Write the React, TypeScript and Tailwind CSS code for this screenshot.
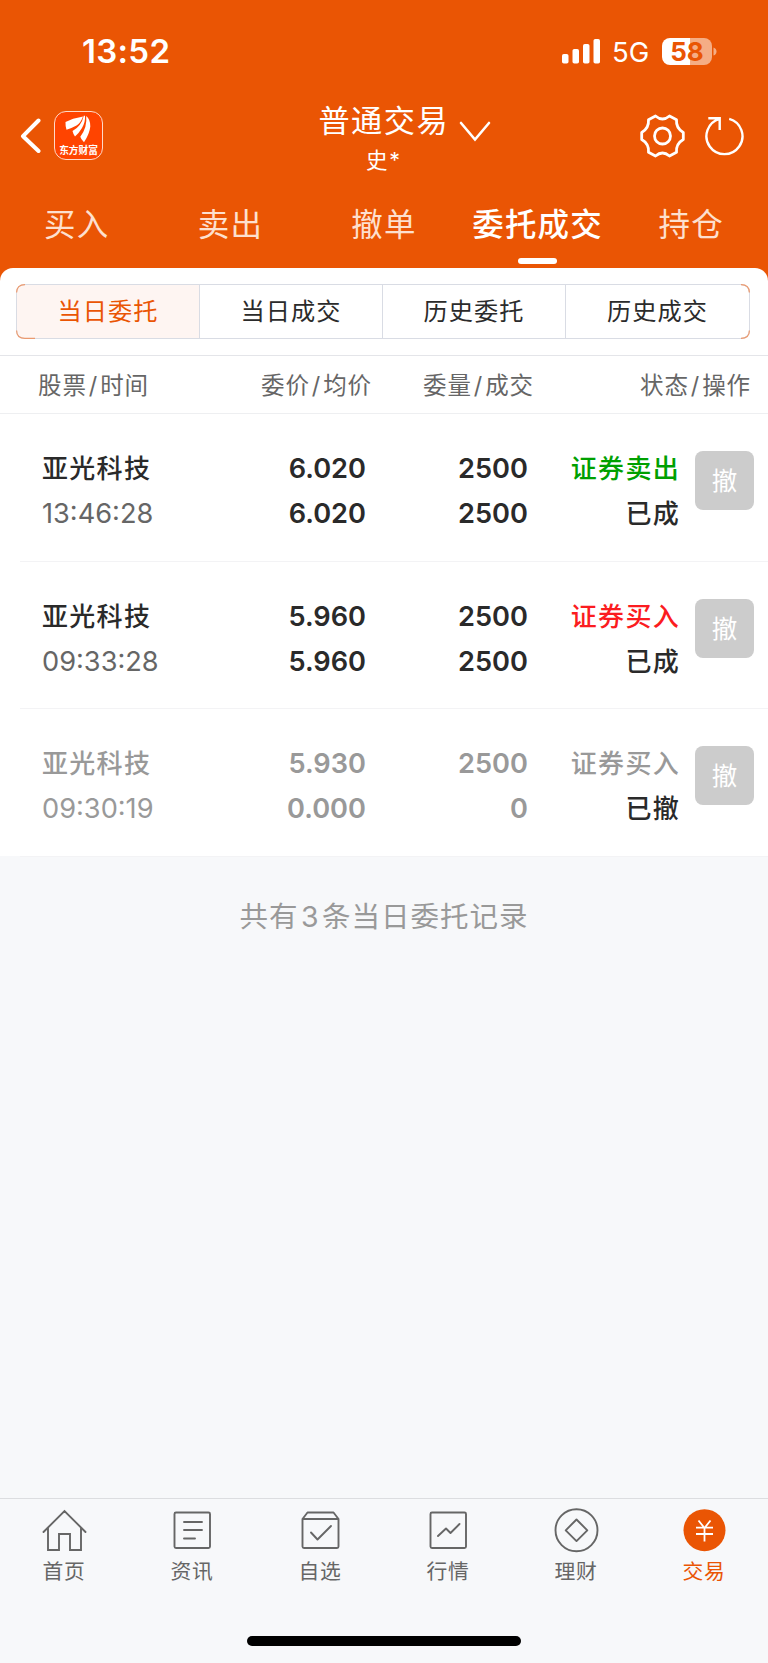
import React from 'react';

const tabs = ['买入', '卖出', '撤单', '委托成交', '持仓'];
const segments = ['当日委托', '当日成交', '历史委托', '历史成交'];

interface Order {
  name: string;
  time: string;
  price: string;
  avg: string;
  amount: string;
  done: string;
  side: string;
  sideColor: string;
  status: string;
  muted?: boolean;
}

const orders: Order[] = [
  { name: '亚光科技', time: '13:46:28', price: '6.020', avg: '6.020', amount: '2500', done: '2500', side: '证券卖出', sideColor: 'text-[#00a000]', status: '已成' },
  { name: '亚光科技', time: '09:33:28', price: '5.960', avg: '5.960', amount: '2500', done: '2500', side: '证券买入', sideColor: 'text-[#fb1c20]', status: '已成' },
  { name: '亚光科技', time: '09:30:19', price: '5.930', avg: '0.000', amount: '2500', done: '0', side: '证券买入', sideColor: 'text-[#999999]', status: '已撤', muted: true },
];

export default function App() {
  return (
    <div className="w-[768px] h-[1663px] flex flex-col overflow-hidden bg-[#f7f8fa] font-['Inter','Noto_Sans_CJK_SC',sans-serif] whitespace-nowrap">
      <header className="bg-[#ea5504] h-[288px] shrink-0 flex flex-col text-white">
        <StatusBar />
        <NavBar />
        <nav className="grid grid-cols-5 h-[78px]">
          {tabs.map((tab) => {
            const active = tab === '委托成交';
            return (
              <div key={tab} className="flex flex-col items-center">
                <span className={`h-[68px] leading-[70px] text-[31.5px] tracking-[1.2px] ${active ? 'font-medium' : 'text-[#fde0cf]'}`}>{tab}</span>
                {active && <span className="w-[39px] h-[6px] rounded-full bg-white" />}
              </div>
            );
          })}
        </nav>
      </header>

      <main className="flex-1 -mt-5">
        <section className="bg-white rounded-t-[13px] h-[588px]">
          <div className="h-[88px] px-4 pt-4 border-b border-[#e4e5e9]">
            <div className="relative w-[734px] h-[55px]">
              <div className="grid grid-cols-4 h-[55px] rounded-[9px] border border-[#d9dce4] bg-white overflow-hidden">
                {segments.map((s, i) => (
                  <div
                    key={s}
                    className={`flex items-center justify-center text-[24.2px] leading-[53px] tracking-[1px] ${i === 0 ? 'bg-[#fef5f2] text-[#ea5504]' : 'text-[#2b2b2b]'} ${i < 3 ? 'border-r border-[#d9dce4]' : ''}`}
                  >
                    {s}
                  </div>
                ))}
              </div>
              {/* orange rounded corners over the grey frame */}
              <svg className="absolute inset-0" width="734" height="55" fill="none" stroke="#ea9a70" strokeWidth="1.2">
                <path d="M0.600 8.500Q0.600 0.600 9 0.600M0.600 46.500Q0.600 54.400 9 54.400H19M725 0.600Q733.400 0.600 733.400 8.500M733.400 46.500Q733.400 54.400 725 54.400" />
              </svg>
            </div>
          </div>

          <div className="flex h-[58px] leading-[59px] border-b border-[#eeeff1] text-[23.5px] tracking-[0.9px] text-[#666666]">
            <ColumnTitle className="w-[211px] pl-[38px]" left="股票" right="时间" />
            <ColumnTitle className="w-[161px] text-right" left="委价" right="均价" />
            <ColumnTitle className="w-[162px] text-right" left="委量" right="成交" />
            <ColumnTitle className="w-[217px] text-right" left="状态" right="操作" />
          </div>

          {orders.map((order) => (
            <OrderRow key={order.time} order={order} />
          ))}
        </section>

        <p className="pt-[37px] text-center text-[28.5px] leading-[48px] tracking-[1px] text-[#999999]">
          共有<span className="mx-[2.5px]">3</span>条当日委托记录
        </p>
      </main>

      <BottomBar />
    </div>
  );
}

function ColumnTitle({ className, left, right }: { className: string, left: string, right: string }) {
  return (
    <span className={className}>
      {left}<span className="mx-[2px]">/</span>{right}
    </span>
  );
}

function StatusBar() {
  return (
    <div className="flex h-[100px] pt-[32px]">
      <span className="w-[478px] pl-[82px] leading-[39px] text-[33px] tracking-[0.3px] font-semibold">13:52</span>
      <svg className="ml-[84px] mt-[7px]" width="39" height="25" fill="#fff">
        <rect x="0" y="15" width="6.5" height="9.5" rx="1.8" />
        <rect x="10.5" y="10" width="6.5" height="14.5" rx="1.8" />
        <rect x="21" y="5" width="6.5" height="19.5" rx="1.8" />
        <rect x="31.5" y="0" width="6.5" height="24.5" rx="1.8" />
      </svg>
      <span className="w-[61px] pl-[11px] leading-[41px] text-[27.5px]">5G</span>
      <div className="mt-[5.5px] w-[50px] h-[27px] rounded-[8px] bg-linear-to-r from-white from-57% to-[#f5ad85] to-57% text-center leading-[27px] text-[26px] font-bold text-[#ea5504]">58</div>
      <svg className="ml-px mt-[15px]" width="4" height="9">
        <path d="M0.5 0.5Q3.5 1.5 3.5 4.5T0.5 8.5Z" fill="#f5ad85" />
      </svg>
    </div>
  );
}

function NavBar() {
  return (
    <div className="flex h-[90px]">
      <div className="flex w-[319px] pl-[20px] pt-[11px]">
        <svg className="mt-[7px]" width="22" height="36" fill="none" stroke="#fff" strokeWidth="4" strokeLinecap="round" strokeLinejoin="round">
          <path d="M18.5 2.5L3 18.2L18.5 33" />
        </svg>
        <div className="ml-[12px] w-[49px] h-[49px] rounded-[12px] border border-[#ffd9c8] bg-[#ff4400] flex flex-col items-center">
          <svg className="mt-[3px]" width="27" height="28" fill="#fff">
            <path d="M0.5 7Q8 3 16 2L18 1.4Q16 7.500 11.500 10.500Q7 13 1.500 14.800Q0.300 11 0.500 7Z" />
            <path d="M18.800 0.800L20 0.800Q20.500 7 17 13Q14 18 10 21.600Q8 18.500 7.500 16Q16.300 11.500 18.800 0.800Z" />
            <path d="M21.200 1Q25.500 4.500 25.300 11.500Q24.500 19 19 27.200Q16 24.500 15.300 21.800Q22.500 12 21.200 1Z" />
          </svg>
          <span className="text-[9.7px] leading-[11px] mt-[2px] font-bold">东方财富</span>
        </div>
      </div>

      <div className="flex flex-col items-center w-[128px]">
        <span className="text-[31.2px] leading-[42px] tracking-[1.5px] -mr-[1.5px]">普通交易</span>
        <span className="pl-[2px] text-[21.5px] leading-[37px] tracking-[1.8px]">史*</span>
      </div>
      <svg className="ml-[12px] mt-[20px]" width="32" height="24" fill="none" stroke="#fff" strokeWidth="2.6" strokeLinecap="round">
        <path d="M2 3L16 19.500L30 3" />
      </svg>

      <svg className="ml-[149px] mt-[14px]" width="45" height="44" viewBox="0 0 45 44" fill="none" stroke="#fff" strokeWidth="2.8" strokeLinejoin="round">
        <path d="M8.500 5.700L15.500 2Q22.500 8 29.500 2L36.500 5.700C36 12 38 15.500 43.300 18.500V25.500C38 28.500 36 32 36.500 38.300L29.500 42Q22.500 36 15.500 42L8.500 38.300C9 32 7 28.500 1.700 25.500V18.500C7 15.500 9 12 8.500 5.700Z" />
        <circle cx="22.500" cy="22" r="8" />
      </svg>
      <svg className="ml-[20px] mt-[15px]" width="40" height="42" fill="none" stroke="#fff" strokeWidth="2.4">
        <path d="M24.200 3.800A18 18 0 1 1 14.700 3.800M3.300 3.300H14.700V15" />
      </svg>
    </div>
  );
}

function OrderRow({ order }: { order: Order }) {
  const dark = order.muted ? 'text-[#999999]' : 'text-[#2a2a2a]';

  return (
    <div className="ml-5 h-[147.600px] border-b border-[#f3f3f5] flex pt-[32px] leading-[45px] text-[27.200px]">
      <div className="w-[173px] pl-[22px] flex flex-col">
        <span className={`text-[26px] tracking-[1.300px] font-medium ${dark}`}>{order.name}</span>
        <span className={order.muted ? 'text-[#999999]' : 'text-[#666666]'}>{order.time}</span>
      </div>
      <div className={`w-[173px] flex flex-col text-right font-semibold ${dark}`}>
        <span>{order.price}</span>
        <span>{order.avg}</span>
      </div>
      <div className={`w-[162px] flex flex-col text-right font-semibold ${dark}`}>
        <span>{order.amount}</span>
        <span>{order.done}</span>
      </div>
      <div className="w-[152px] flex flex-col text-right text-[26px] tracking-[1.300px] font-medium">
        <span className={order.sideColor}>{order.side}</span>
        <span className="text-[#2a2a2a]">{order.status}</span>
      </div>
      <button className="ml-[15px] mt-[5px] w-[59px] h-[59px] rounded-[8px] bg-[#cccccc] text-white text-[25.500px] leading-[59px]">撤</button>
    </div>
  );
}

function BottomBar() {
  const g = { fill: 'none', stroke: '#666', strokeWidth: 1.9, strokeLinejoin: 'round' as const, strokeLinecap: 'round' as const };

  const items = [
    {
      label: '首页',
      icon: <path d="M1.500 24L22.500 3L43.500 24M6 20V42H17V26H28V42H39V20" {...g} strokeLinejoin="miter" />,
    },
    {
      label: '资讯',
      icon: (
        <g {...g}>
          <rect x="4.500" y="4.500" width="35.500" height="35.500" rx="1.500" />
          <path d="M14 14H32M14 22H32M14 30.500H25" />
        </g>
      ),
    },
    {
      label: '自选',
      icon: (
        <g {...g}>
          <path d="M4.500 11L9.500 4.500H35.500L40.500 11V38.500Q40.500 40 39 40H6Q4.500 40 4.500 38.500ZM4.500 11H40.500" />
          <path d="M13 24.500L19.500 31.500L33 18" />
        </g>
      ),
    },
    {
      label: '行情',
      icon: (
        <g {...g}>
          <rect x="4.500" y="4.500" width="35.500" height="35.500" rx="1.500" />
          <path d="M12 28L20 20.500L24.500 25L33.500 16" />
        </g>
      ),
    },
    {
      label: '理财',
      icon: (
        <g {...g}>
          <circle cx="22.500" cy="22.200" r="21" />
          <path d="M22.500 11.500L33.300 22.300L22.500 33.100L11.700 22.300Z" />
        </g>
      ),
    },
    {
      label: '交易',
      active: true,
      icon: (
        <g>
          <circle cx="22.500" cy="22.200" r="21" fill="#ea5504" />
          <path d="M16.500 12.500L22.500 20L28.500 12.500M22.500 20V33.500M14 19.700H31M14 26H31" fill="none" stroke="#fff" strokeWidth="1.800" />
        </g>
      ),
    },
  ];

  return (
    <footer className="h-[165px] border-t border-[#dcdde0] flex flex-col items-center">
      <div className="grid grid-cols-6 w-full h-[137px] pt-[8.500px]">
        {items.map((item) => (
          <div key={item.label} className="flex flex-col items-center">
            <svg width="45" height="45" viewBox="0 0 45 45">{item.icon}</svg>
            <span className={`text-[20.800px] leading-[38px] tracking-[0.600px] ${item.active ? 'text-[#ea5504]' : 'text-[#666666]'}`}>{item.label}</span>
          </div>
        ))}
      </div>
      <div className="w-[274px] h-[10px] rounded-full bg-black" />
    </footer>
  );
}
